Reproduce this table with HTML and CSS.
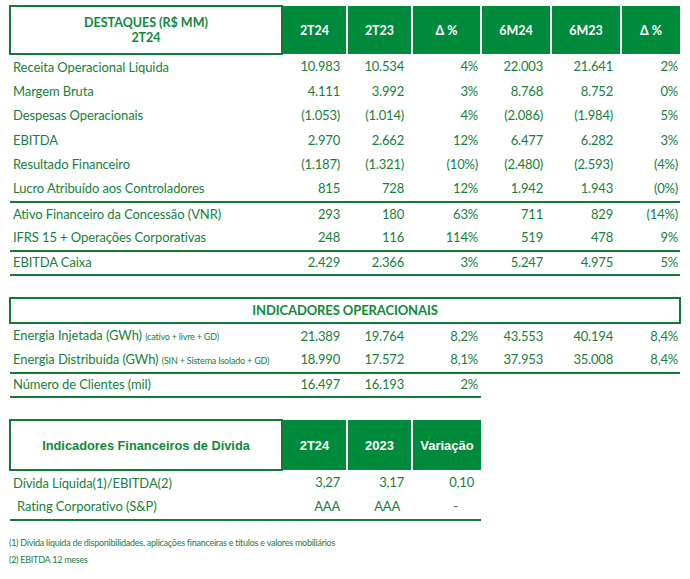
FILE: index.html
```html
<!DOCTYPE html>
<html lang="pt">
<head>
<meta charset="utf-8">
<link rel="stylesheet" href="styles.css">
</head>
<body>
<div class="page">
  <table class="t t1">
    <colgroup><col class="c0"><col class="c1"><col class="c2"><col class="c3"><col class="c4"><col class="c5"><col class="c6"></colgroup>
    <thead>
      <tr>
        <th class="title">DESTAQUES (R$ MM)<br>2T24</th>
        <th class="g">2T24</th><th class="g">2T23</th><th class="g">Δ %</th><th class="g">6M24</th><th class="g">6M23</th><th class="g">Δ %</th>
      </tr>
    </thead>
    <tbody>
      <tr class="first"><td>Receita Operacional Líquida</td><td class="p1">10.983</td><td class="p2">10.534</td><td class="p3">4%</td><td class="p4">22.003</td><td class="p5">21.641</td><td class="p6">2%</td></tr>
      <tr><td>Margem Bruta</td><td class="p1">4.111</td><td class="p2">3.992</td><td class="p3">3%</td><td class="p4">8.768</td><td class="p5">8.752</td><td class="p6">0%</td></tr>
      <tr><td>Despesas Operacionais</td><td class="p1">(1.053)</td><td class="p2">(1.014)</td><td class="p3">4%</td><td class="p4">(2.086)</td><td class="p5">(1.984)</td><td class="p6">5%</td></tr>
      <tr><td>EBITDA</td><td class="p1">2.970</td><td class="p2">2.662</td><td class="p3">12%</td><td class="p4">6.477</td><td class="p5">6.282</td><td class="p6">3%</td></tr>
      <tr><td>Resultado Financeiro</td><td class="p1">(1.187)</td><td class="p2">(1.321)</td><td class="p3">(10%)</td><td class="p4">(2.480)</td><td class="p5">(2.593)</td><td class="p6">(4%)</td></tr>
      <tr class="rule"><td>Lucro Atribuído aos Controladores</td><td class="p1">815</td><td class="p2">728</td><td class="p3">12%</td><td class="p4">1.942</td><td class="p5">1.943</td><td class="p6">(0%)</td></tr>
      <tr><td>Ativo Financeiro da Concessão (VNR)</td><td class="p1">293</td><td class="p2">180</td><td class="p3">63%</td><td class="p4">711</td><td class="p5">829</td><td class="p6">(14%)</td></tr>
      <tr class="rule"><td>IFRS 15 + Operações Corporativas</td><td class="p1">248</td><td class="p2">116</td><td class="p3">114%</td><td class="p4">519</td><td class="p5">478</td><td class="p6">9%</td></tr>
      <tr class="rule"><td>EBITDA Caixa</td><td class="p1">2.429</td><td class="p2">2.366</td><td class="p3">3%</td><td class="p4">5.247</td><td class="p5">4.975</td><td class="p6">5%</td></tr>
    </tbody>
  </table>

  <table class="t t2">
    <colgroup><col class="c0"><col class="c1"><col class="c2"><col class="c3"><col class="c4"><col class="c5"><col class="c6"></colgroup>
    <thead>
      <tr><th class="boxhead" colspan="7">INDICADORES OPERACIONAIS</th></tr>
    </thead>
    <tbody>
      <tr class="first"><td>Energia Injetada (GWh) <span class="sm">(cativo + livre + GD)</span></td><td class="p1">21.389</td><td class="p2">19.764</td><td class="p3">8,2%</td><td class="p4">43.553</td><td class="p5">40.194</td><td class="p6">8,4%</td></tr>
      <tr class="rule"><td>Energia Distribuída (GWh) <span class="sm">(SIN + Sistema Isolado + GD)</span></td><td class="p1">18.990</td><td class="p2">17.572</td><td class="p3">8,1%</td><td class="p4">37.953</td><td class="p5">35.008</td><td class="p6">8,4%</td></tr>
      <tr class="rule part"><td>Número de Clientes (mil)</td><td class="p1">16.497</td><td class="p2">16.193</td><td class="p3">2%</td><td class="blank"></td><td class="blank"></td><td class="blank"></td></tr>
    </tbody>
  </table>

  <table class="t t3">
    <colgroup><col class="c0"><col class="c1"><col class="c2"><col class="c3w"></colgroup>
    <thead>
      <tr>
        <th class="title title3">Indicadores Financeiros de Dívida</th>
        <th class="g g3">2T24</th><th class="g g3">2023</th><th class="g g3">Variação</th>
      </tr>
    </thead>
    <tbody>
      <tr class="first"><td>Dívida Líquida(1)/EBITDA(2)</td><td class="p1">3,27</td><td class="p2">3,17</td><td class="p3b">0,10</td></tr>
      <tr class="rule"><td class="ind">Rating Corporativo (S&amp;P)</td><td class="p1">AAA</td><td class="p2b">AAA</td><td class="dash">-</td></tr>
    </tbody>
  </table>

  <div class="notes">
    <p>(1) Dívida líquida de disponibilidades, aplicações financeiras e títulos e valores mobiliários</p>
    <p>(2) EBITDA 12 meses</p>
  </div>
</div>
</body>
</html>
```

FILE: styles.css
```css
* { box-sizing: border-box; }
html, body { margin: 0; padding: 0; background: #fff; }
body {
  font-family: "Lato", "Noto Sans", sans-serif;
  color: #17803a;
}
.page {
  padding: 5px 0 0 9px;
  width: 690px;
}
.t {
  border-collapse: collapse;
  border-spacing: 0;
  table-layout: fixed;
  width: 670px;
  font-size: 13px;
}
.t3 { width: 471px; }
.c0 { width: 272px; }
.c1 { width: 65px; }
.c2 { width: 65px; }
.c3 { width: 69px; }
.c3w { width: 69px; }
.c4 { width: 70px; }
.c5 { width: 70px; }
.c6 { width: 59px; }

th { padding: 0; font-weight: 700; }
.title {
  height: 48px;
  border: 2px solid #127a35;
  background: #fff;
  color: #0e8a3a;
  font-size: 12.5px;
  line-height: 15px;
  text-align: center;
}
.g {
  background: #008a3b;
  color: #fff;
  font-size: 12.5px;
  line-height: 15px;
  border-left: 2px solid #fff;
  text-align: center;
}
.t3 .title { height: 50px; }
.title3, .g3 {
  font-family: "Liberation Sans", "Open Sans", sans-serif;
  font-size: 13px;
}
.title3 { color: #0e8a3a; font-size: 12.8px; }

.boxhead {
  height: 25px;
  border: 2px solid #127a35;
  color: #0e8a3a;
  font-size: 13px;
  line-height: 15px;
  text-align: center;
  letter-spacing: -0.1px;
}

td {
  height: 24.5px;
  padding: 0;
  line-height: 15px;
  white-space: nowrap;
  text-align: right;
  letter-spacing: -0.2px;
  vertical-align: middle;
}
td:first-child { text-align: left; padding-left: 3px; letter-spacing: -0.1px; }
tr.first td { padding-top: 0; height: 25px; }
tr.rule td { border-bottom: 2px solid #127a35; }
tr.part td.blank { border-bottom: none; }

.p1 { padding-right: 7px; }
.p2 { padding-right: 8px; }
.p3 { padding-right: 3px; }
.p4 { padding-right: 8px; }
.p5 { padding-right: 8px; }
.p6 { padding-right: 2px; }
.p3b { padding-right: 7px; }
.p2b { padding-right: 12px; }
.dash { text-align: center; padding-left: 18px; }
td.ind { padding-left: 7px; }

.sm { font-size: 9px; letter-spacing: -0.2px; }

.t2 { margin-top: 21px; }
.t3 { margin-top: 21px; }

.notes {
  margin-top: 16px;
  font-size: 9px;
  letter-spacing: -0.25px;
}
.notes p { margin: 0 0 6px 0; line-height: 11px; }
```
